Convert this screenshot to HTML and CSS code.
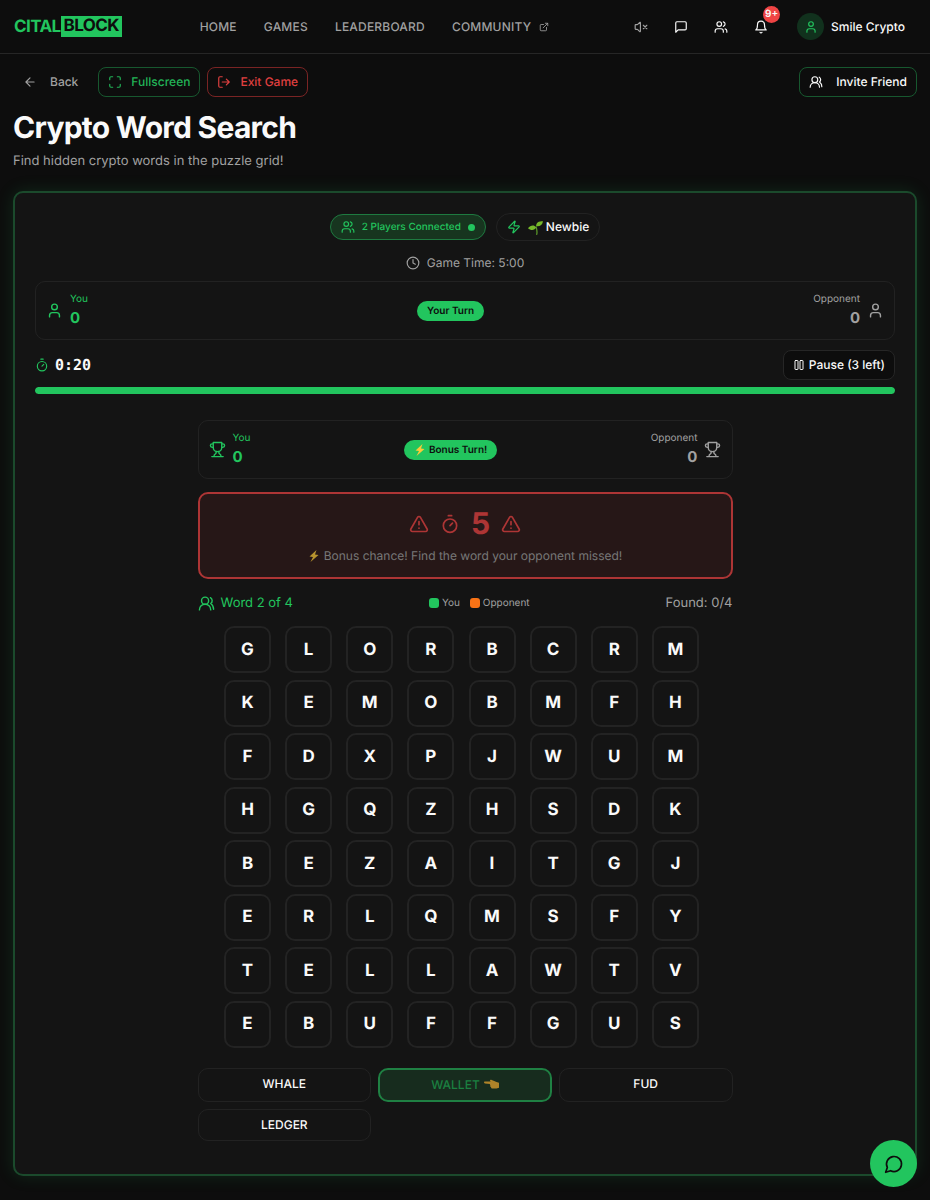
FILE: index.html
```html
<!DOCTYPE html>
<html lang="en">
<head>
    <meta charset="UTF-8">
    <meta name="viewport" content="width=device-width, initial-scale=1.0">
    <title>Crypto Word Search</title>
    <link rel="stylesheet" href="styles.css">
</head>
<body>
    <!-- Shared icons -->
    <svg class="sprite" aria-hidden="true">
        <symbol id="i-external" viewBox="0 0 24 24"><path d="M15 3h6v6M10 14 21 3M18 13v6a2 2 0 0 1-2 2H5a2 2 0 0 1-2-2V8a2 2 0 0 1 2-2h6"/></symbol>
        <symbol id="i-muted" viewBox="0 0 24 24"><path d="M11 4.7a.7.7 0 0 0-1.2-.5L6.4 7.6A1.4 1.4 0 0 1 5.4 8H3a1 1 0 0 0-1 1v6a1 1 0 0 0 1 1h2.4a1.4 1.4 0 0 1 1 .4l3.4 3.4a.7.7 0 0 0 1.2-.5zM22 9l-6 6M16 9l6 6"/></symbol>
        <symbol id="i-message" viewBox="0 0 24 24"><path d="M21 15a2 2 0 0 1-2 2H7l-4 4V5a2 2 0 0 1 2-2h14a2 2 0 0 1 2 2z"/></symbol>
        <symbol id="i-users" viewBox="0 0 24 24"><path d="M16 21v-2a4 4 0 0 0-4-4H6a4 4 0 0 0-4 4v2M22 21v-2a4 4 0 0 0-3-3.87M16 3.13a4 4 0 0 1 0 7.75"/><circle cx="9" cy="7" r="4"/></symbol>
        <symbol id="i-users-round" viewBox="0 0 24 24"><path d="M18 21a8 8 0 0 0-16 0M22 20c0-3.37-2-6.5-4-8a5 5 0 0 0-.45-8.3"/><circle cx="10" cy="8" r="5"/></symbol>
        <symbol id="i-bell" viewBox="0 0 24 24"><path d="M6 8a6 6 0 0 1 12 0c0 7 3 9 3 9H3s3-2 3-9M10.3 21a1.94 1.94 0 0 0 3.4 0"/></symbol>
        <symbol id="i-user" viewBox="0 0 24 24"><path d="M19 21v-2a4 4 0 0 0-4-4H9a4 4 0 0 0-4 4v2"/><circle cx="12" cy="7" r="4"/></symbol>
        <symbol id="i-back" viewBox="0 0 24 24"><path d="m12 19-7-7 7-7M19 12H5"/></symbol>
        <symbol id="i-full" viewBox="0 0 24 24"><path d="M8 3H5a2 2 0 0 0-2 2v3M21 8V5a2 2 0 0 0-2-2h-3M3 16v3a2 2 0 0 0 2 2h3M16 21h3a2 2 0 0 0 2-2v-3"/></symbol>
        <symbol id="i-exit" viewBox="0 0 24 24"><path d="M9 21H5a2 2 0 0 1-2-2V5a2 2 0 0 1 2-2h4M16 17l5-5-5-5M21 12H9"/></symbol>
        <symbol id="i-zap" viewBox="0 0 24 24"><path d="M4 14a1 1 0 0 1-.78-1.63l9.9-10.2a.5.5 0 0 1 .86.46l-1.92 6.02A1 1 0 0 0 13 10h7a1 1 0 0 1 .78 1.63l-9.9 10.2a.5.5 0 0 1-.86-.46l1.92-6.02A1 1 0 0 0 11 14z"/></symbol>
        <symbol id="i-clock" viewBox="0 0 24 24"><circle cx="12" cy="12" r="10"/><path d="M12 6v6l4 2"/></symbol>
        <symbol id="i-timer" viewBox="0 0 24 24"><path d="M10 2h4M12 14l3-3"/><circle cx="12" cy="14" r="8"/></symbol>
        <symbol id="i-pause" viewBox="0 0 24 24"><rect x="14" y="3" width="6" height="18" rx="1"/><rect x="4" y="3" width="6" height="18" rx="1"/></symbol>
        <symbol id="i-trophy" viewBox="0 0 24 24"><path d="M6 9H4.5a2.5 2.5 0 0 1 0-5H6M18 9h1.5a2.5 2.5 0 0 0 0-5H18M4 22h16M10 14.66V17c0 .55-.47.98-.97 1.21C7.85 18.75 7 20.24 7 22M14 14.66V17c0 .55.47.98.97 1.21C16.15 18.75 17 20.24 17 22M18 2H6v7a6 6 0 0 0 12 0V2z"/></symbol>
        <symbol id="i-alert" viewBox="0 0 24 24"><path d="m21.73 18-8-14a2 2 0 0 0-3.48 0l-8 14A2 2 0 0 0 4 21h16a2 2 0 0 0 1.73-3M12 9v4M12 17h.01"/></symbol>
        <symbol id="i-chat" viewBox="0 0 24 24"><path d="M7.9 20A9 9 0 1 0 4 16.1L2 22z"/></symbol>
        <symbol id="i-bolt" viewBox="0 0 24 24"><path fill="#fcc93a" stroke="none" d="M17 0 3 13l7 1L5 24 21 10l-7-1z"/></symbol>
        <symbol id="i-seedling" viewBox="0 0 24 24"><path fill="none" stroke="#5c9b2a" d="M14 23c1-5 0-9-1-12"/><path fill="#76b82a" stroke="none" d="M13 10c0-6 4-8 11-8-1 6-5 9-11 8zM13 12C10 7 4 8 0 13c4 4 11 4 13-1z"/></symbol>
        <symbol id="i-point" viewBox="0 0 24 24"><path fill="#f0a92e" stroke="none" d="M1.500 7h9l-1-1.500c0-1 1-1.500 2-1L20 8l4 1v8l-4 1.500h-7c-1.500 0-2-1-1.500-2-1.500-.2-1.800-1.500-1-2.500-1.500-.5-1.500-2-.5-3l-8.500-.8c-2-.2-2-3.200 0-3.200z"/></symbol>
    </svg>

    <header class="topbar">
        <a class="logo" href="#">CITAL<span class="logo-mark">BLOCK</span></a>
        <nav class="nav">
            <a href="#">HOME</a>
            <a href="#">GAMES</a>
            <a href="#">LEADERBOARD</a>
            <a href="#">COMMUNITY <svg class="icon icon-xs"><use href="#i-external"/></svg></a>
        </nav>
        <div class="actions">
            <button class="icon-btn dim" aria-label="Sound off"><svg class="icon"><use href="#i-muted"/></svg></button>
            <button class="icon-btn" aria-label="Messages"><svg class="icon"><use href="#i-message"/></svg></button>
            <button class="icon-btn" aria-label="Friends"><svg class="icon"><use href="#i-users"/></svg></button>
            <button class="icon-btn" aria-label="Notifications"><svg class="icon"><use href="#i-bell"/></svg><span class="badge">9+</span></button>
            <a class="profile" href="#"><span class="avatar"><svg class="icon"><use href="#i-user"/></svg></span>Smile Crypto</a>
        </div>
    </header>

    <main>
        <div class="toolbar">
            <button class="btn btn-back"><svg class="icon"><use href="#i-back"/></svg>Back</button>
            <button class="btn btn-green"><svg class="icon"><use href="#i-full"/></svg>Fullscreen</button>
            <button class="btn btn-red"><svg class="icon"><use href="#i-exit"/></svg>Exit Game</button>
            <button class="btn btn-invite"><svg class="icon"><use href="#i-users-round"/></svg>Invite Friend</button>
        </div>
        <h1>Crypto Word Search</h1>
        <p class="subtitle">Find hidden crypto words in the puzzle grid!</p>

        <section class="card">
            <div class="pills">
                <span class="pill pill-players"><svg class="icon"><use href="#i-users"/></svg>2 Players Connected<i class="dot"></i></span>
                <span class="pill pill-level"><svg class="icon green"><use href="#i-zap"/></svg><span class="level"><svg class="icon icon-md"><use href="#i-seedling"/></svg>Newbie</span></span>
            </div>
            <p class="game-time"><svg class="icon"><use href="#i-clock"/></svg>Game Time: 5:00</p>

            <div class="score">
                <div class="player green"><svg class="icon icon-lg"><use href="#i-user"/></svg><div><span class="who">You</span><strong>0</strong></div></div>
                <span class="turn">Your Turn</span>
                <div class="player opponent"><div><span class="who">Opponent</span><strong>0</strong></div><svg class="icon icon-lg"><use href="#i-user"/></svg></div>
            </div>

            <div class="timer">
                <span class="clock"><svg class="icon green"><use href="#i-timer"/></svg>0:20</span>
                <button class="btn btn-pause"><svg class="icon icon-sm"><use href="#i-pause"/></svg>Pause (3 left)</button>
            </div>
            <div class="progress"><div class="progress-fill" style="width: 100%"></div></div>

            <div class="game">
                <div class="score">
                    <div class="player green"><svg class="icon icon-lg"><use href="#i-trophy"/></svg><div><span class="who">You</span><strong>0</strong></div></div>
                    <span class="turn"><svg class="icon icon-sm"><use href="#i-bolt"/></svg>Bonus Turn!</span>
                    <div class="player opponent"><div><span class="who">Opponent</span><strong>0</strong></div><svg class="icon icon-lg"><use href="#i-trophy"/></svg></div>
                </div>

                <div class="alert">
                    <div class="countdown">
                        <svg class="icon icon-xl"><use href="#i-alert"/></svg>
                        <svg class="icon icon-xl"><use href="#i-timer"/></svg>
                        <strong>5</strong>
                        <svg class="icon icon-xl"><use href="#i-alert"/></svg>
                    </div>
                    <p><svg class="icon icon-sm"><use href="#i-bolt"/></svg>Bonus chance! Find the word your opponent missed!</p>
                </div>

                <div class="status">
                    <span class="status-word green"><svg class="icon icon-lg"><use href="#i-users-round"/></svg>Word 2 of 4</span>
                    <span class="legend"><i class="swatch you"></i>You<i class="swatch opp"></i>Opponent</span>
                    <span class="found">Found: 0/4</span>
                </div>

                <div class="board" id="board"></div>

                <ul class="words">
                    <li>WHALE</li>
                    <li class="current">WALLET <svg class="icon icon-md"><use href="#i-point"/></svg></li>
                    <li>FUD</li>
                    <li>LEDGER</li>
                </ul>
            </div>
        </section>
    </main>

    <button class="chat-btn" aria-label="Open chat"><svg class="icon icon-xl"><use href="#i-chat"/></svg></button>

    <script>
        const rows = ["GLORBCRM", "KEMOBMFH", "FDXPJWUM", "HGQZHSDK", "BEZAITGJ", "ERLQMSFY", "TELLAWTV", "EBUFFGUS"];
        const board = document.getElementById("board");

        rows.forEach(function(row) {
            row.split("").forEach(function(letter) {
                const cell = document.createElement("button");
                cell.className = "cell";
                cell.textContent = letter;
                board.appendChild(cell);
            });
        });
    </script>
</body>
</html>
```
FILE: styles.css
```css
* {
    box-sizing: border-box;
}

body {
    margin: 0;
    background-color: #0d0d0d;
    color: #fafafa;
    font-family: Inter, "Liberation Sans", sans-serif;
    font-size: 13px;
    line-height: 18px;
    text-rendering: geometricPrecision;
}

h1, p, ul {
    margin: 0;
    padding: 0;
}

a {
    color: inherit;
    text-decoration: none;
}

button {
    font: inherit;
    color: inherit;
    background: none;
    border: none;
    padding: 0;
    cursor: pointer;
    text-rendering: inherit;
}

.sprite {
    position: absolute;
    width: 0;
    height: 0;
}

.icon {
    flex: none;
    width: 14px;
    height: 14px;
    fill: none;
    stroke: currentColor;
    stroke-width: 2;
    stroke-linecap: round;
    stroke-linejoin: round;
}

.icon-xs {
    width: 10px;
    height: 10px;
}

.icon-sm {
    width: 12px;
    height: 12px;
}

.icon-md {
    width: 15px;
    height: 15px;
}

.icon-lg {
    width: 17px;
    height: 17px;
}

.icon-xl {
    width: 20px;
    height: 20px;
}

.green {
    color: #22c55e;
}

/* Top bar */
.topbar {
    display: flex;
    align-items: center;
    justify-content: space-between;
    height: 54px;
    padding: 0 25px 0 14px;
    border-bottom: 1px solid #262626;
}

.logo {
    display: flex;
    align-items: center;
    color: #22c55e;
    font-size: 17px;
    font-weight: 700;
    letter-spacing: -0.6px;
}

.logo-mark {
    background-color: #22c55e;
    color: #0d0d0d;
    padding: 1px 3px;
    line-height: 19px;
}

.nav {
    display: flex;
    gap: 27px;
    color: #a1a1a1;
    font-size: 12px;
    font-weight: 500;
    letter-spacing: 0.2px;
}

.nav a {
    display: flex;
    align-items: center;
    gap: 8px;
}

.actions {
    display: flex;
    align-items: center;
    gap: 13px;
}

.icon-btn {
    position: relative;
    display: flex;
    align-items: center;
    justify-content: center;
    width: 27px;
    height: 27px;
}

.dim {
    color: #a1a1a1;
}

.badge {
    position: absolute;
    top: -7px;
    right: -6px;
    width: 17px;
    height: 17px;
    border-radius: 50%;
    background-color: #ef4444;
    font-size: 10px;
    font-weight: 600;
    line-height: 17px;
    text-align: center;
}

.profile {
    display: flex;
    align-items: center;
    gap: 7px;
    margin-left: 10px;
    font-size: 12px;
    font-weight: 500;
}

.avatar {
    display: flex;
    align-items: center;
    justify-content: center;
    width: 27px;
    height: 27px;
    border-radius: 50%;
    background-color: #11311d;
    color: #22c55e;
}

/* Page */
main {
    padding: 13px 13px 25px;
}

.toolbar {
    display: flex;
    gap: 7px;
}

.btn {
    display: flex;
    align-items: center;
    height: 30px;
    padding: 0 9px;
    gap: 9px;
    border: 1px solid transparent;
    border-radius: 8px;
    font-size: 12px;
    font-weight: 500;
}

.btn-back {
    gap: 13px;
    margin-right: 3px;
    color: #a1a1a1;
}

.btn-green {
    border-color: #17582f;
    color: #22b357;
}

.btn-red {
    border-color: #7a2424;
    color: #e04040;
}

.btn-invite {
    margin-left: auto;
    gap: 13px;
    border-color: #17582f;
}

h1 {
    margin-top: 12px;
    font-size: 30px;
    font-weight: 700;
    letter-spacing: -0.75px;
    line-height: 38px;
}

.subtitle {
    margin-top: 5px;
    color: #a1a1a1;
    line-height: 18px;
}

.card {
    margin-top: 21px;
    padding: 20px 20px 33px;
    border: 2px solid #1b4a2c;
    border-radius: 10px;
    background-color: #141414;
    box-shadow: 0 0 17px rgba(34, 197, 94, 0.15);
}

.pills {
    display: flex;
    align-items: center;
    justify-content: center;
    gap: 10px;
}

.pill {
    display: flex;
    align-items: center;
    gap: 7px;
    border: 1px solid #222222;
    border-radius: 20px;
}

.pill-players {
    height: 26px;
    padding: 0 10px;
    border-color: #1e7a40;
    background-color: #17351f;
    color: #22c55e;
    font-size: 10px;
    font-weight: 500;
}

.pill-level {
    height: 28px;
    padding: 0 10px;
    font-size: 12px;
    font-weight: 500;
}

.level {
    display: flex;
    align-items: center;
    gap: 3px;
}

.dot {
    width: 7px;
    height: 7px;
    border-radius: 50%;
    background-color: #22c55e;
}

.game-time {
    display: flex;
    align-items: center;
    justify-content: center;
    gap: 7px;
    margin: 13px 0 9px;
    color: #a1a1a1;
    font-size: 12px;
}

.score {
    display: flex;
    align-items: center;
    justify-content: space-between;
    height: 59px;
    padding: 0 10px;
    border: 1px solid #222222;
    border-radius: 10px;
}

.player {
    display: flex;
    align-items: center;
    gap: 7px;
}

.opponent {
    color: #a1a1a1;
    text-align: right;
}

.who {
    display: block;
    font-size: 10px;
    line-height: 14px;
}

.player strong {
    display: block;
    font-size: 15px;
    font-weight: 700;
    line-height: 24px;
}

.turn {
    display: flex;
    align-items: center;
    gap: 3px;
    height: 20px;
    padding: 0 10px;
    border-radius: 10px;
    background-color: #22c55e;
    color: #0d0d0d;
    font-size: 10px;
    font-weight: 600;
}

.timer {
    display: flex;
    align-items: center;
    justify-content: space-between;
    margin: 10px 0 7px;
}

.clock {
    display: flex;
    align-items: center;
    gap: 6px;
    font-family: "DejaVu Sans Mono", "Liberation Mono", monospace;
    font-size: 15px;
    font-weight: 700;
}

.btn-pause {
    gap: 4px;
    border-color: #262626;
    background-color: #0d0d0d;
}

.progress {
    height: 7px;
    border-radius: 4px;
    background-color: #262626;
    overflow: hidden;
}

.progress-fill {
    height: 100%;
    border-radius: 4px;
    background-color: #22c55e;
}

/* Game area */
.game {
    max-width: 535px;
    margin: 26px auto 0;
}

.alert {
    margin-top: 13px;
    padding: 13px 13px 12px;
    border: 2px solid #ef4444;
    border-radius: 10px;
    background-color: rgba(239, 68, 68, 0.12);
    opacity: 0.7;
}

.countdown {
    display: flex;
    align-items: center;
    justify-content: center;
    gap: 11px;
    color: #ef4444;
}

.countdown strong {
    font-size: 30px;
    line-height: 34px;
}

.alert p {
    display: flex;
    align-items: center;
    justify-content: center;
    gap: 4px;
    margin-top: 6px;
    color: #a1a1a1;
    font-size: 12px;
}

.status {
    display: flex;
    align-items: center;
    justify-content: space-between;
    margin: 14px 0 13px;
    line-height: 20px;
}

.status-word {
    display: flex;
    align-items: center;
    gap: 6px;
}

.legend {
    display: flex;
    align-items: center;
    gap: 3px;
    color: #a1a1a1;
    font-size: 10px;
}

.swatch {
    width: 10px;
    height: 10px;
    border-radius: 3px;
}

.you {
    background-color: #22c55e;
}

.opp {
    margin-left: 7px;
    background-color: #f97316;
}

.found {
    color: #a1a1a1;
}

.board {
    display: grid;
    grid-template-columns: repeat(8, 1fr);
    align-content: space-between;
    column-gap: 7px;
    max-width: 482px;
    aspect-ratio: 8 / 7;
    margin: 0 auto;
}

.cell {
    width: 47px;
    height: 47px;
    border: 2px solid #232323;
    border-radius: 10px;
    font-size: 17px;
    font-weight: 700;
}

.words {
    display: grid;
    grid-template-columns: repeat(3, 1fr);
    gap: 7px;
    margin-top: 20px;
    list-style: none;
    font-size: 12px;
    font-weight: 500;
    text-align: center;
}

.words li {
    padding: 6px;
    border: 1px solid #222222;
    border-radius: 10px;
}

.words .current {
    display: flex;
    align-items: center;
    justify-content: center;
    gap: 4px;
    border: 2px solid #1f8043;
    background-color: #172c1e;
    color: #1b8041;
}

.current .icon {
    opacity: 0.7;
}

.chat-btn {
    position: fixed;
    right: 13px;
    bottom: 13px;
    display: flex;
    align-items: center;
    justify-content: center;
    width: 47px;
    height: 47px;
    border-radius: 50%;
    background-color: #22c55e;
    color: #0d0d0d;
}
```
